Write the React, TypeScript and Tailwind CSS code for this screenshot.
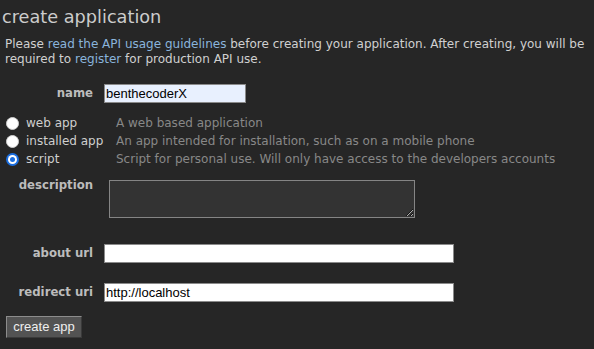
import React from "react";

function Radio({ checked }: { checked?: boolean }) {
  if (checked) {
    return (
      <span className="flex h-[13px] w-[13px] shrink-0 items-center justify-center rounded-full bg-[#1a6ee0]">
        <span className="flex h-[9px] w-[9px] items-center justify-center rounded-full bg-white">
          <span className="h-[5px] w-[5px] rounded-full bg-[#1a6ee0]" />
        </span>
      </span>
    );
  }
  return <span className="h-[13px] w-[13px] shrink-0 rounded-full border border-[#d0d0d0] bg-white" />;
}

const radios = [
  { label: "web app", desc: "A web based application", checked: false },
  { label: "installed app", desc: "An app intended for installation, such as on a mobile phone", checked: false },
  { label: "script", desc: "Script for personal use. Will only have access to the developers accounts", checked: true },
];

export default function App() {
  return (
    <div
      className="h-[349px] w-[594px] overflow-hidden bg-[#262626] text-[#cfcfcf]"
      style={{ fontFamily: '"DejaVu Sans", Verdana, sans-serif' }}
    >
      <h1 className="pl-[2px] pt-[6px] text-[17.7px] leading-[22px] text-[#cccccc]">create application</h1>
      <p className="mt-[9px] pl-[5px] text-[12px] leading-[15px] text-[#d0d0d0]">
        Please <span className="text-[#8ab4dc]">read the API usage guidelines</span> before creating your application.
        After creating, you will be
        <br />
        required to <span className="text-[#8ab4dc]">register</span> for production API use.
      </p>

      <div className="mt-[17px] flex items-center">
        <div className="w-[93px] text-right text-[11.7px] font-bold leading-[15px] text-[#bcbcbc]">name</div>
        <div
          className="ml-[11px] flex h-[19px] w-[142px] items-center border border-[#8a8a8a] bg-[#e8f0fe] pl-[1px] text-[13px] text-black"
          style={{ fontFamily: '"Liberation Sans", Arial, sans-serif' }}
        >
          benthecoderX
        </div>
      </div>

      <div className="mt-[11px] flex flex-col">
        {radios.map((r) => (
          <div key={r.label} className="flex h-[18px] items-center">
            <div className="flex w-[116px] items-center pl-[6px]">
              <Radio checked={r.checked} />
              <span className="ml-[7px] text-[12px] leading-[15px] text-[#cfcfcf]">{r.label}</span>
            </div>
            <span className="text-[12px] leading-[15px] text-[#888888]">{r.desc}</span>
          </div>
        ))}
      </div>

      <div className="mt-[10px] flex items-start">
        <div className="w-[93px] text-right text-[11.7px] font-bold leading-[15px] text-[#bcbcbc]">description</div>
        <textarea
          className="ml-[16px] mt-[2px] h-[38px] w-[306px] border border-[#858585] bg-[#333333] outline-none"
          defaultValue=""
        />
      </div>

      <div className="mt-[26px] flex items-center">
        <div className="w-[93px] text-right text-[11.7px] font-bold leading-[15px] text-[#bcbcbc]">about url</div>
        <div className="ml-[11px] h-[19px] w-[350px] border border-[#8a8a8a] bg-white" />
      </div>

      <div className="mt-[20px] flex items-center">
        <div className="w-[93px] text-right text-[11.7px] font-bold leading-[15px] text-[#bcbcbc]">redirect uri</div>
        <div
          className="ml-[11px] flex h-[19px] w-[350px] items-center border border-[#8a8a8a] bg-white pl-[1px] text-[13px] text-black"
          style={{ fontFamily: '"Liberation Sans", Arial, sans-serif' }}
        >
          http://localhost
        </div>
      </div>

      <div className="mt-[14px] pl-[6px]">
        <button
          className="flex h-[22px] w-[76px] items-center justify-center border border-t-[#8c8c8c] border-l-[#8c8c8c] border-r-[#3a3a3a] border-b-[#3a3a3a] bg-[#535353] text-[13px] text-[#eeeeee]"
          style={{ fontFamily: '"Liberation Sans", Arial, sans-serif' }}
        >
          create app
        </button>
      </div>
    </div>
  );
}
